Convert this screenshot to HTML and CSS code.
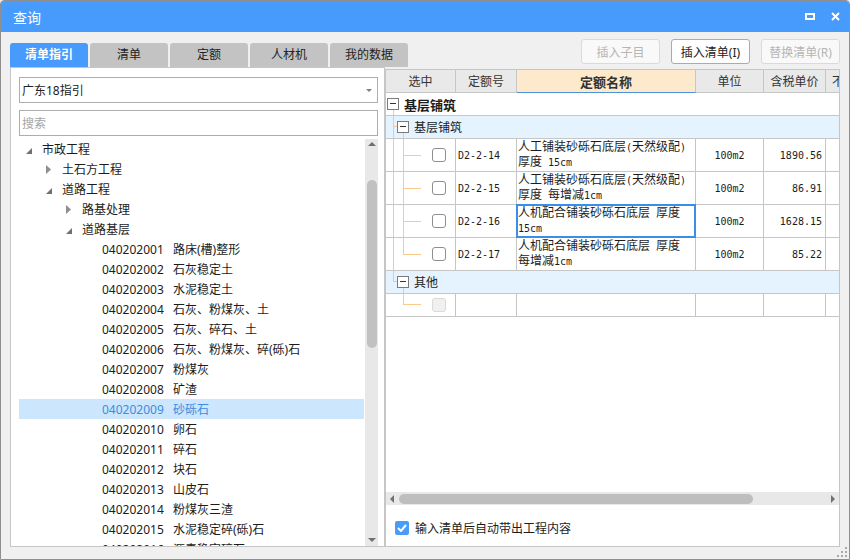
FILE: index.html
```html
<!DOCTYPE html>
<html lang="zh-CN">
<head>
<meta charset="utf-8">
<title>查询</title>
<link rel="stylesheet" href="styles.css">
</head>
<body>
<div class="win">
  <div class="titlebar">
    <span class="title">查询</span>
    <div class="wctrl">
      <svg width="10" height="7" viewBox="0 0 10 7"><rect x="1" y="1" width="8" height="5" fill="none" stroke="#fff" stroke-width="2"/></svg>
      <svg width="9" height="9" viewBox="0 0 9 9"><path d="M1 1L8 8M8 1L1 8" stroke="#fff" stroke-width="2" fill="none"/></svg>
    </div>
  </div>

  <div class="toolbar">
    <div class="tabs">
      <div class="tab on">清单指引</div>
      <div class="tab">清单</div>
      <div class="tab">定额</div>
      <div class="tab">人材机</div>
      <div class="tab">我的数据</div>
    </div>
    <div class="btns">
      <button class="btn">插入子目</button>
      <button class="btn act">插入清单(I)</button>
      <button class="btn">替换清单(R)</button>
    </div>
  </div>

  <div class="main">
    <div class="left">
      <div class="combo">
        <span>广东18指引</span>
        <svg class="carr" width="6" height="3" viewBox="0 0 6 3"><path d="M0 0H6L3 3Z" fill="#808080"/></svg>
      </div>
      <div class="search"><span class="ph">搜索</span></div>
      <div class="tree">
        <div class="tree-list">
          <div class="tr l0"><span class="tg"><svg class="exp" width="6" height="6" viewBox="0 0 6 6"><path d="M6 0V6H0Z" fill="#707070"/></svg></span>市政工程</div>
          <div class="tr l1"><span class="tg"><svg width="5" height="9" viewBox="0 0 5 9"><path d="M0 0L5 4.5L0 9Z" fill="#8f8f8f"/></svg></span>土石方工程</div>
          <div class="tr l1"><span class="tg"><svg class="exp" width="6" height="6" viewBox="0 0 6 6"><path d="M6 0V6H0Z" fill="#707070"/></svg></span>道路工程</div>
          <div class="tr l2"><span class="tg"><svg width="5" height="9" viewBox="0 0 5 9"><path d="M0 0L5 4.5L0 9Z" fill="#8f8f8f"/></svg></span>路基处理</div>
          <div class="tr l2"><span class="tg"><svg class="exp" width="6" height="6" viewBox="0 0 6 6"><path d="M6 0V6H0Z" fill="#707070"/></svg></span>道路基层</div>
          <div class="tr l3"><span class="tg"></span><span class="cd">040202001</span>路床(槽)整形</div>
          <div class="tr l3"><span class="tg"></span><span class="cd">040202002</span>石灰稳定土</div>
          <div class="tr l3"><span class="tg"></span><span class="cd">040202003</span>水泥稳定土</div>
          <div class="tr l3"><span class="tg"></span><span class="cd">040202004</span>石灰、粉煤灰、土</div>
          <div class="tr l3"><span class="tg"></span><span class="cd">040202005</span>石灰、碎石、土</div>
          <div class="tr l3"><span class="tg"></span><span class="cd">040202006</span>石灰、粉煤灰、碎(砾)石</div>
          <div class="tr l3"><span class="tg"></span><span class="cd">040202007</span>粉煤灰</div>
          <div class="tr l3"><span class="tg"></span><span class="cd">040202008</span>矿渣</div>
          <div class="tr l3 sel"><span class="tg"></span><span class="cd">040202009</span>砂砾石</div>
          <div class="tr l3"><span class="tg"></span><span class="cd">040202010</span>卵石</div>
          <div class="tr l3"><span class="tg"></span><span class="cd">040202011</span>碎石</div>
          <div class="tr l3"><span class="tg"></span><span class="cd">040202012</span>块石</div>
          <div class="tr l3"><span class="tg"></span><span class="cd">040202013</span>山皮石</div>
          <div class="tr l3"><span class="tg"></span><span class="cd">040202014</span>粉煤灰三渣</div>
          <div class="tr l3"><span class="tg"></span><span class="cd">040202015</span>水泥稳定碎(砾)石</div>
          <div class="tr l3"><span class="tg"></span><span class="cd">040202016</span>沥青稳定碎石</div>
        </div>
        <div class="vscroll">
          <svg class="va" width="8" height="4" viewBox="0 0 8 4"><path d="M0 4L4 0L8 4Z" fill="#707070"/></svg>
          <div class="vthumb"></div>
          <svg class="vb" width="8" height="4" viewBox="0 0 8 4"><path d="M0 0L4 4L8 0Z" fill="#707070"/></svg>
        </div>
      </div>
    </div>

    <div class="right">
      <div class="grid">
        <div class="hdr">
          <div class="hc">选中</div>
          <div class="hc">定额号</div>
          <div class="hc act">定额名称</div>
          <div class="hc">单位</div>
          <div class="hc">含税单价</div>
          <div class="hc last">不含税单价</div>
        </div>
        <div class="grp g1"><span class="bx"></span><b class="gt">基层铺筑</b></div>
        <div class="grp g2"><span class="bx"></span><span class="st">基层铺筑</span></div>
        <div class="dr">
          <div class="c c1"><span class="cb"></span></div>
          <div class="c c2 m">D2-2-14</div>
          <div class="c c3"><div>人工铺装砂砾石底层<span class="m">(</span>天然级配<span class="m">)</span><br>厚度<span class="m"> 15cm</span></div></div>
          <div class="c c4 m">100m2</div>
          <div class="c c5 m">1890.56</div>
          <div class="c c6"></div>
        </div>
        <div class="dr">
          <div class="c c1"><span class="cb"></span></div>
          <div class="c c2 m">D2-2-15</div>
          <div class="c c3"><div>人工铺装砂砾石底层<span class="m">(</span>天然级配<span class="m">)</span><br>厚度<span class="m"> </span>每增减<span class="m">1cm</span></div></div>
          <div class="c c4 m">100m2</div>
          <div class="c c5 m">86.91</div>
          <div class="c c6"></div>
        </div>
        <div class="dr">
          <div class="c c1"><span class="cb"></span></div>
          <div class="c c2 m">D2-2-16</div>
          <div class="c c3 sel"><div>人机配合铺装砂砾石底层<span class="m"> </span>厚度<br><span class="m">15cm</span></div></div>
          <div class="c c4 m">100m2</div>
          <div class="c c5 m">1628.15</div>
          <div class="c c6"></div>
        </div>
        <div class="dr lastd">
          <div class="c c1"><span class="cb"></span></div>
          <div class="c c2 m">D2-2-17</div>
          <div class="c c3"><div>人机配合铺装砂砾石底层<span class="m"> </span>厚度<br>每增减<span class="m">1cm</span></div></div>
          <div class="c c4 m">100m2</div>
          <div class="c c5 m">85.22</div>
          <div class="c c6"></div>
        </div>
        <div class="grp g3"><span class="bx"></span><span class="st">其他</span></div>
        <div class="er">
          <div class="c c1"><span class="cb dis"></span></div>
          <div class="c"></div>
          <div class="c"></div>
          <div class="c"></div>
          <div class="c"></div>
          <div class="c c6"></div>
        </div>
      </div>
      <div class="hscroll">
        <svg width="4" height="8" viewBox="0 0 4 8"><path d="M4 0V8L0 4Z" fill="#707070"/></svg>
        <div class="hthumb"></div>
        <svg class="ha" width="4" height="8" viewBox="0 0 4 8"><path d="M0 0V8L4 4Z" fill="#707070"/></svg>
      </div>
      <div class="foot">
        <span class="ck"><svg width="10" height="8" viewBox="0 0 10 8"><path d="M1 4L4 7L9 1" stroke="#fff" stroke-width="2" fill="none"/></svg></span>
        <span class="ft">输入清单后自动带出工程内容</span>
      </div>
    </div>
  </div>

  <svg class="grip" width="10" height="10" viewBox="0 0 10 10" fill="#a8a8a8">
    <rect x="8" y="0" width="2" height="2"/>
    <rect x="4" y="4" width="2" height="2"/><rect x="8" y="4" width="2" height="2"/>
    <rect x="0" y="8" width="2" height="2"/><rect x="4" y="8" width="2" height="2"/><rect x="8" y="8" width="2" height="2"/>
  </svg>
</div>
</body>
</html>
```

FILE: styles.css
```css
* { box-sizing: border-box; }
html, body { margin: 0; padding: 0; }
body {
  font-family: "Noto Sans", "Noto Sans CJK SC", sans-serif;
  font-size: 12px;
  color: #222;
  background: #fff;
  --tl: #f7c98b;
  --line: #c6c6c6;
}

.win {
  position: relative;
  width: 850px;
  height: 560px;
  border: 1px solid #8f8f8f;
  border-radius: 4px 4px 0 0;
  background: #f0f0f0;
  display: flex;
  flex-direction: column;
  overflow: hidden;
}

/* title bar */
.titlebar {
  height: 31px;
  flex: none;
  background: #469bfd;
  display: flex;
  align-items: center;
  padding: 0 9px 0 12px;
}
.title { color: #fff; font-size: 14px; font-family: "Noto Sans CJK SC", sans-serif; }
.wctrl { margin-left: auto; display: flex; align-items: center; gap: 16px; }

/* toolbar */
.toolbar { height: 35px; flex: none; display: flex; padding: 0 9px; }
.tabs { display: flex; gap: 2px; align-self: flex-end; }
.tab {
  width: 78px;
  height: 24px;
  line-height: 24px;
  text-align: center;
  background: #c3c3c3;
  border-radius: 3px 3px 0 0;
  color: #222;
}
.tab.on { background: #469bfd; color: #fff; font-weight: bold; }
.btns { margin-left: auto; margin-top: 7px; display: flex; gap: 11px; align-self: flex-start; }
.btn {
  width: 79px;
  height: 25px;
  padding: 0;
  border: 1px solid #dadada;
  border-radius: 3px;
  background: #f9f9f9;
  color: #b5b5b5;
  font-family: inherit;
  font-size: 12px;
}
.btn.act { border-color: #ababab; background: #fff; color: #222; }

/* main */
.main { height: 480px; flex: none; display: flex; padding: 0 9px; }

.left {
  width: 375px;
  height: 480px;
  border: 1px solid var(--line);
  background: #fff;
  padding: 9px 6px 0 8px;
  display: flex;
  flex-direction: column;
}
.combo, .search {
  height: 26px;
  flex: none;
  border: 1px solid #adadad;
  display: flex;
  align-items: center;
  padding-left: 2px;
}
.carr { margin-left: auto; margin-right: 5px; }
.search { margin-top: 7px; }
.ph { color: #a5a5a5; }

.tree { margin-top: 3px; flex: 1; display: flex; overflow: hidden; min-height: 0; }
.tree-list { flex: 1; overflow: hidden; }
.tr { height: 20px; display: flex; align-items: center; white-space: nowrap; color: #1c1c1c; }
.tr.l1 { padding-left: 20px; }
.tr.l2 { padding-left: 40px; }
.tr.l3 { padding-left: 60px; }
.tg { width: 23px; flex: none; display: flex; align-items: center; padding-left: 7px; }
.tg .exp { margin-top: 3px; }
.cd { display: inline-block; width: 71px; }
.tr.sel { background: #cce6fd; color: #3b8de0; }

.vscroll {
  width: 13px;
  flex: none;
  margin-left: 1px;
  background: #e8e8e8;
  display: flex;
  flex-direction: column;
  align-items: center;
}
.va { margin-top: 3px; }
.vthumb { width: 10px; height: 168px; margin-top: 34px; border-radius: 5px; background: #c1c1c1; }
.vb { margin-top: auto; margin-bottom: 4px; }

/* right panel */
.right {
  width: 455px;
  height: 478px;
  margin-top: 2px;
  border: 1px solid var(--line);
  background: #fff;
  display: flex;
  flex-direction: column;
}
.grid { flex: 1; overflow: hidden; min-height: 0; }
.hdr, .dr, .er { display: grid; grid-template-columns: 70px 61px 179px 68px 62px 13px; }
.hc {
  height: 23px;
  background: #e9e9e9;
  border-right: 1px solid var(--line);
  border-bottom: 1px solid var(--line);
  display: flex;
  align-items: center;
  justify-content: center;
  color: #333;
  white-space: nowrap;
  overflow: hidden;
}
.hc.act { background: #fde9cb; border-bottom-color: #4d90dc; font-weight: bold; font-size: 13px; }
.hc.last { border-right: 0; justify-content: flex-start; padding-left: 6px; }

.grp {
  height: 23px;
  border-bottom: 1px solid var(--line);
  display: flex;
  align-items: center;
  background-repeat: no-repeat;
}
.bx {
  width: 12px;
  height: 12px;
  flex: none;
  border: 1px solid #7b7b7b;
  background: linear-gradient(#333, #333) 2px 4px / 6px 1px no-repeat, #fff;
}
.gt { font-size: 13px; margin-left: 5px; color: #1c1c1c; }
.st { margin-left: 5px; color: #1c1c1c; }
.g1 {
  padding-left: 1px;
  background: linear-gradient(var(--tl), var(--tl)) 7px 16px / 1px 40px no-repeat;
}
.g2 {
  padding-left: 11px;
  background:
    linear-gradient(var(--tl), var(--tl)) 7px 0 / 1px 40px no-repeat,
    linear-gradient(var(--tl), var(--tl)) 7px 10px / 4px 1px no-repeat,
    linear-gradient(var(--tl), var(--tl)) 17px 16px / 1px 40px no-repeat,
    #e5f3ff;
}
.g3 {
  padding-left: 11px;
  background:
    linear-gradient(var(--tl), var(--tl)) 7px 0 / 1px 11px no-repeat,
    linear-gradient(var(--tl), var(--tl)) 7px 10px / 4px 1px no-repeat,
    linear-gradient(var(--tl), var(--tl)) 17px 16px / 1px 40px no-repeat,
    #e5f3ff;
}

.c {
  height: 33px;
  border-right: 1px solid var(--line);
  border-bottom: 1px solid var(--line);
  display: flex;
  align-items: center;
  white-space: nowrap;
  overflow: hidden;
  color: #1c1c1c;
}
.er .c { height: 23px; }
.c6 { border-right: 0; }
.c1 { padding-left: 46px; }
.dr .c1 {
  background:
    linear-gradient(var(--tl), var(--tl)) 7px 0 / 1px 40px no-repeat,
    linear-gradient(var(--tl), var(--tl)) 17px 0 / 1px 40px no-repeat,
    linear-gradient(var(--tl), var(--tl)) 17px 16px / 18px 1px no-repeat;
}
.dr.lastd .c1 {
  background:
    linear-gradient(var(--tl), var(--tl)) 7px 0 / 1px 40px no-repeat,
    linear-gradient(var(--tl), var(--tl)) 17px 0 / 1px 17px no-repeat,
    linear-gradient(var(--tl), var(--tl)) 17px 16px / 18px 1px no-repeat;
}
.er .c1 {
  background:
    linear-gradient(var(--tl), var(--tl)) 17px 0 / 1px 11px no-repeat,
    linear-gradient(var(--tl), var(--tl)) 17px 10px / 18px 1px no-repeat;
}
.c2 { padding-left: 2px; }
.c3 { padding-left: 1px; line-height: 14px; }
.c4 { justify-content: center; }
.c5 { justify-content: flex-end; padding-right: 3px; }
.m { font-family: "DejaVu Sans Mono", monospace; font-size: 10px; }

.c3.sel { position: relative; overflow: visible; }
.c3.sel::after {
  content: "";
  position: absolute;
  left: -1px;
  top: -1px;
  right: -1px;
  bottom: -1px;
  border: 2px solid #3a8ee8;
}

.cb { width: 14px; height: 14px; border: 1px solid #8e8e8e; border-radius: 3px; background: #fff; }
.cb.dis { border-color: #d9d9d9; background: #f0f0f0; }

.hscroll {
  height: 13px;
  flex: none;
  background: #e8e8e8;
  display: flex;
  align-items: center;
  padding: 0 4px;
}
.hthumb { width: 354px; height: 10px; margin-left: 5px; border-radius: 5px; background: #bebebe; }
.ha { margin-left: auto; }

.foot {
  height: 41px;
  flex: none;
  display: flex;
  align-items: center;
  padding: 5px 0 0 9px;
}
.ck {
  width: 14px;
  height: 14px;
  border-radius: 2px;
  background: #4a9cf8;
  display: flex;
  align-items: center;
  justify-content: center;
}
.ft { margin-left: 6px; color: #1c1c1c; }

.grip { position: absolute; right: 2px; bottom: 2px; }
```
